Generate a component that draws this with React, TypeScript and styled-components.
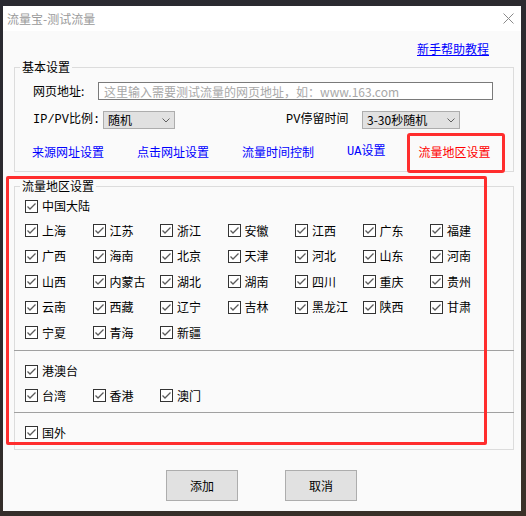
import styled, { createGlobalStyle } from "styled-components";

const GlobalStyle = createGlobalStyle`
  html, body {
    margin: 0;
    padding: 0;
  }
  body {
    width: 526px;
    height: 516px;
    overflow: hidden;
    background: linear-gradient(165deg, #2a2a31 0%, #2d2a2c 55%, #3b3128 100%);
    font-family: "Noto Sans CJK SC", sans-serif;
    font-size: 12px;
    color: #000;
  }
  * {
    box-sizing: border-box;
  }
`;

const Window = styled.div`
  margin: 6px 0 0 3px;
  width: 518px;
  height: 505px;
  background: #fafafa;
  display: flex;
  flex-direction: column;
`;

const TitleBar = styled.div`
  height: 25px;
  background: #fff;
  display: flex;
  align-items: center;
  justify-content: space-between;
  padding: 0 7px 0 4px;
`;

const Title = styled.span`
  color: #9a9a9a;
  line-height: 16px;
`;

const Body = styled.div`
  flex: 1;
  display: flex;
  flex-direction: column;
  padding: 0 7px 0 11px;
`;

const HelpRow = styled.div`
  display: flex;
  justify-content: flex-end;
  padding: 10px 25px 2px 0;
`;

const Link = styled.span<{ $color?: string; $underline?: boolean; $mono?: boolean }>`
  color: ${(p) => p.$color || "#0000ff"};
  text-decoration: ${(p) => (p.$underline ? "underline" : "none")};
  font-family: ${(p) =>
    p.$mono ? `"Liberation Mono", "Noto Sans CJK SC", monospace` : `"Noto Sans CJK SC", sans-serif`};
  line-height: 16px;
  white-space: nowrap;
  cursor: pointer;
`;

// current tab gets a red frame drawn over it
const ActiveLink = styled(Link)`
  position: relative;
  &::after {
    content: "";
    position: absolute;
    left: -11px;
    right: -15px;
    top: -11px;
    bottom: -13px;
    border: 3px solid #ff2d2d;
    border-radius: 3px;
  }
`;

const Group = styled.fieldset`
  margin: 0;
  padding: 0;
  min-width: 0;
  border: 1px solid #dcdcdc;
`;

const Legend = styled.legend`
  margin-left: 5px;
  padding: 0 2px;
  line-height: 16px;
`;

const BasicContent = styled.div`
  padding: 7px 0 11px 18px;
  display: flex;
  flex-direction: column;
`;

const FormRow = styled.div<{ $gap?: number }>`
  display: flex;
  align-items: center;
  height: 18px;
  margin-top: ${(p) => p.$gap || 0}px;
`;

const Label = styled.span<{ $width: number; $mono?: boolean }>`
  width: ${(p) => p.$width}px;
  flex-shrink: 0;
  line-height: 16px;
  white-space: nowrap;
  font-family: ${(p) =>
    p.$mono ? `"Liberation Mono", "Noto Sans CJK SC", monospace` : `"Noto Sans CJK SC", sans-serif`};
`;

const UrlInput = styled.input`
  width: 395px;
  height: 18px;
  border: 1px solid #7a7a7a;
  background: #fff;
  padding: 0 5px;
  font-family: "Noto Sans CJK SC", sans-serif;
  font-size: 12px;
  outline: none;
  &::placeholder {
    color: #a8a8a8;
  }
`;

const Select = styled.div<{ $width: number }>`
  width: ${(p) => p.$width}px;
  height: 18px;
  background: #e1e1e1;
  border: 1px solid #adadad;
  display: flex;
  align-items: center;
  justify-content: space-between;
  padding: 0 4px 0 4px;
  line-height: 16px;
`;

const Spacer = styled.div<{ $width: number }>`
  width: ${(p) => p.$width}px;
  flex-shrink: 0;
`;

const LinkRow = styled.div`
  display: flex;
  gap: 33px;
  margin: 15px 0 0 -1px;
`;

const AreaPanel = styled.div`
  position: relative;
  margin-top: 6px;
`;

const Highlight = styled.div`
  position: absolute;
  left: -8px;
  top: -2px;
  width: 481px;
  height: 269px;
  border: 3px solid #ff2d2d;
  border-radius: 2px;
  pointer-events: none;
`;

const Section = styled.div<{ $top: number; $bottom: number }>`
  padding: ${(p) => p.$top}px 0 ${(p) => p.$bottom}px 10px;
`;

const Divider = styled.div`
  height: 1px;
  background: #a0a0a0;
  margin: 0 -1px;
`;

const Grid = styled.div`
  display: grid;
  grid-template-columns: repeat(7, 67.5px);
  grid-auto-rows: 25.5px;
`;

const CheckRow = styled.div<{ $height: number }>`
  height: ${(p) => p.$height}px;
  display: flex;
  align-items: center;
`;

const CheckItem = styled.label`
  display: flex;
  align-items: center;
  gap: 4px;
  line-height: 16px;
  white-space: nowrap;
`;

const Footer = styled.div`
  display: flex;
  justify-content: center;
  gap: 47px;
  margin-top: 20px;
  padding-right: 5px;
`;

const Button = styled.button`
  width: 72px;
  height: 31px;
  background: #e1e1e1;
  border: 1px solid #adadad;
  font-family: "Noto Sans CJK SC", sans-serif;
  font-size: 12px;
  color: #000;
  padding: 0;
`;

function CloseIcon() {
  return (
    <svg width="11" height="11" viewBox="0 0 11 11">
      <path d="M0.5 0.5 L10.5 10.5 M10.5 0.5 L0.5 10.5" stroke="#8a8a8a" strokeWidth="1" />
    </svg>
  );
}

function Chevron() {
  return (
    <svg width="8" height="5" viewBox="0 0 8 5">
      <path d="M0.5 0.5 L4 4 L7.5 0.5" fill="none" stroke="#606060" strokeWidth="1" />
    </svg>
  );
}

function Check({ label }: { label: string }) {
  return (
    <CheckItem>
      <svg width="13" height="13" viewBox="0 0 13 13">
        <rect x="0.5" y="0.5" width="12" height="12" fill="#fff" stroke="#333" />
        <path d="M2.5 6.5 L5 9 L10.5 3.5" fill="none" stroke="#5a5a5a" strokeWidth="1.3" />
      </svg>
      <span>{label}</span>
    </CheckItem>
  );
}

const mainland = [
  "上海", "江苏", "浙江", "安徽", "江西", "广东", "福建",
  "广西", "海南", "北京", "天津", "河北", "山东", "河南",
  "山西", "内蒙古", "湖北", "湖南", "四川", "重庆", "贵州",
  "云南", "西藏", "辽宁", "吉林", "黑龙江", "陕西", "甘肃",
  "宁夏", "青海", "新疆",
];

const hkMacauTaiwan = ["台湾", "香港", "澳门"];

export default function App() {
  return (
    <>
      <GlobalStyle />
      <Window>
        <TitleBar>
          <Title>流量宝-测试流量</Title>
          <CloseIcon />
        </TitleBar>
        <Body>
          <HelpRow>
            <Link $underline>新手帮助教程</Link>
          </HelpRow>

          <Group>
            <Legend>基本设置</Legend>
            <BasicContent>
              <FormRow>
                <Label $width={65}>网页地址:</Label>
                <UrlInput placeholder="这里输入需要测试流量的网页地址，如：www.163.com" />
              </FormRow>
              <FormRow $gap={11}>
                <Label $width={70} $mono>IP/PV比例:</Label>
                <Select $width={72}>
                  <span>随机</span>
                  <Chevron />
                </Select>
                <Spacer $width={111} />
                <Label $width={76} $mono>PV停留时间</Label>
                <Select $width={98}>
                  <span>3-30秒随机</span>
                  <Chevron />
                </Select>
              </FormRow>
              <LinkRow>
                <Link>来源网址设置</Link>
                <Link>点击网址设置</Link>
                <Link>流量时间控制</Link>
                <Link $mono>UA设置</Link>
                <ActiveLink $color="#ff0000">流量地区设置</ActiveLink>
              </LinkRow>
            </BasicContent>
          </Group>

          <AreaPanel>
            <Group>
              <Legend>流量地区设置</Legend>
              <Section $top={0} $bottom={4.5}>
                <CheckRow $height={24}>
                  <Check label="中国大陆" />
                </CheckRow>
                <Grid>
                  {mainland.map((p) => (
                    <CheckRow key={p} $height={25.5}>
                      <Check label={p} />
                    </CheckRow>
                  ))}
                </Grid>
              </Section>
              <Divider />
              <Section $top={8} $bottom={3}>
                <CheckRow $height={24}>
                  <Check label="港澳台" />
                </CheckRow>
                <Grid>
                  {hkMacauTaiwan.map((p) => (
                    <CheckRow key={p} $height={25}>
                      <Check label={p} />
                    </CheckRow>
                  ))}
                </Grid>
              </Section>
              <Divider />
              <Section $top={8} $bottom={4}>
                <CheckRow $height={24}>
                  <Check label="国外" />
                </CheckRow>
              </Section>
            </Group>
            <Highlight />
          </AreaPanel>

          <Footer>
            <Button>添加</Button>
            <Button>取消</Button>
          </Footer>
        </Body>
      </Window>
    </>
  );
}
